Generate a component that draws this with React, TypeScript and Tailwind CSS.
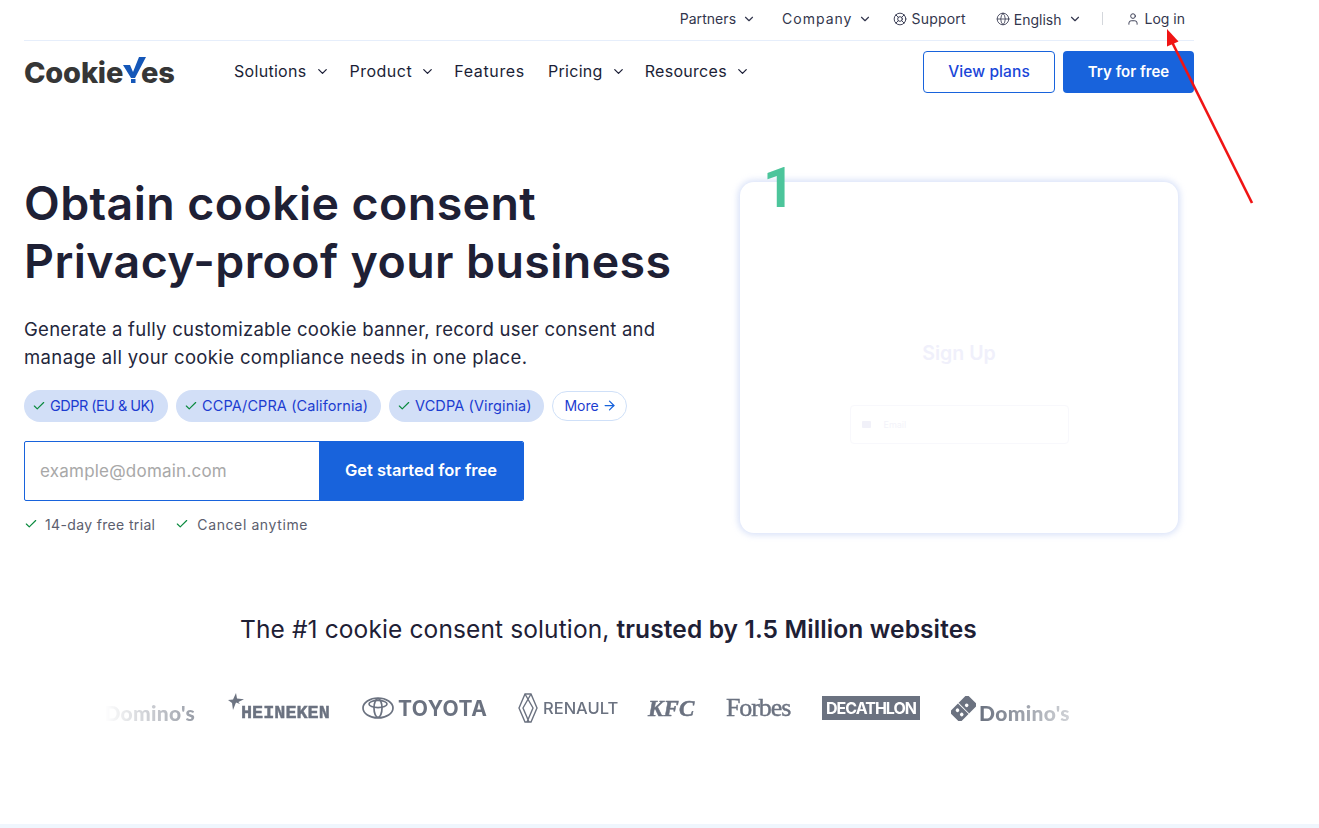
import React from "react";
import { ChevronDown, Check, ArrowRight, Globe, User, LifeBuoy } from "lucide-react";

const font = { fontFamily: 'Inter, "Noto Sans", sans-serif' };

function TopItem({ label, chevron = true, icon, className = "" }: { label: string; chevron?: boolean; icon?: React.ReactNode; className?: string }) {
  return (
    <span className={`flex items-center text-[14px] text-[#33364d] ${className}`}>
      {icon}
      {label}
      {chevron && <ChevronDown className="ml-[6px] h-[14px] w-[14px]" strokeWidth={2} />}
    </span>
  );
}

function NavItem({ label, chevron = true, track = "tracking-[0.3px]" }: { label: string; chevron?: boolean; track?: string }) {
  return (
    <span className={`flex items-center text-[16px] font-normal text-[#1b1e36] ${track}`}>
      {label}
      {chevron && <ChevronDown className="ml-[8px] h-[15px] w-[15px]" strokeWidth={2} />}
    </span>
  );
}

function Chip({ label, w, track }: { label: string; w: string; track: string }) {
  return (
    <span className={`flex h-[32px] items-center rounded-full bg-[#d2dff7] pl-[8px] text-[14.5px] text-[#1c3cd0] ${w} ${track}`}>
      <Check className="mr-[4px] h-[14px] w-[14px] shrink-0 text-[#0a8a3e]" strokeWidth={2} />
      <span className="whitespace-nowrap">{label}</span>
    </span>
  );
}

function Logos() {
  return (
    <div className="mt-[46px] ml-[105px] h-[34px] w-[1005px] overflow-hidden [mask-image:linear-gradient(to_right,transparent_0%,black_13%,black_87%,transparent_100%)]">
      <div className="-ml-[29px] flex h-full w-[1100px] items-center text-[#6b7280]">
        <span className="flex w-[119px] items-center justify-end pt-[8px] text-[21px] font-black leading-none tracking-[0.3px]" style={{ fontFamily: 'Lato, sans-serif' }}>Domino's</span>
        <span className="ml-[32px] flex w-[103px] items-end">
          <svg width="20" height="24" viewBox="0 0 20 24" className="-mr-[6px] mb-[6px] shrink-0" fill="#6b7280"><path d="M9 0l1 5.5 7 .8-5.6 2.6L13 11l-4-1.4L6 17l-1-7-4-3 5-.6z" /></svg>
          <span className="pt-[10px] text-[18.5px] font-bold leading-none [-webkit-text-stroke:0.4px_#6b7280]" style={{ fontFamily: '"Liberation Mono", monospace' }}>HEINEKEN</span>
        </span>
        <span className="ml-[32px] flex w-[124px] items-center">
          <svg width="32" height="22" viewBox="0 0 32 22" fill="none" stroke="#6b7280" strokeWidth="1.7" className="shrink-0">
            <ellipse cx="16" cy="11" rx="15" ry="10" />
            <ellipse cx="16" cy="11" rx="4" ry="9.4" />
            <ellipse cx="16" cy="7" rx="9" ry="3.6" />
          </svg>
          <span className="ml-[4px] text-[21px] font-bold leading-none tracking-[0.5px]" style={{ fontFamily: 'Inter, sans-serif' }}>TOYOTA</span>
        </span>
        <span className="ml-[32px] flex w-[99px] items-center">
          <svg width="20" height="30" viewBox="0 0 20 30" fill="none" stroke="#6b7280" strokeWidth="1.4" className="shrink-0">
            <path d="M7 1L1 15l6 14h6l6-14-6-14z" />
            <path d="M7 1l8 14-6 14M13 1L5 15l6 14" />
          </svg>
          <span className="ml-[5px] text-[16.5px] font-medium leading-none" style={{ fontFamily: 'Inter, sans-serif' }}>RENAULT</span>
        </span>
        <span className="ml-[31px] w-[48px] text-[23px] font-bold italic leading-none tracking-[0.2px] [-webkit-text-stroke:0.5px_#6b7280]" style={{ fontFamily: '"Liberation Serif", serif' }}>KFC</span>
        <span className="ml-[30px] w-[64px] text-[26px] leading-none tracking-[-1.1px] [-webkit-text-stroke:0.4px_#6b7280]" style={{ fontFamily: '"Liberation Serif", serif' }}>Forbes</span>
        <span className="ml-[32px] flex h-[24px] w-[98px] items-center justify-center bg-[#6b7280] text-[16px] font-bold tracking-[-1px] text-white" style={{ fontFamily: 'Inter, sans-serif' }}>DECATHLON</span>
        <span className="ml-[31px] flex w-[119px] items-center">
          <svg width="25" height="25" viewBox="0 0 25 25" className="shrink-0">
            <g transform="rotate(-45 12.5 12.5)">
              <rect x="5" y="0" width="15" height="25" rx="2" fill="#6b7280" transform="rotate(90 12.5 12.5)" />
              <circle cx="7" cy="9.5" r="1.8" fill="#fff" /><circle cx="7" cy="15.5" r="1.8" fill="#fff" />
              <circle cx="17" cy="12.5" r="1.8" fill="#fff" /><rect x="12.2" y="5" width="0.9" height="15" fill="#fff" />
            </g>
          </svg>
          <span className="ml-[3px] pt-[8px] text-[21px] font-black leading-none tracking-[0.35px]" style={{ fontFamily: 'Lato, sans-serif' }}>Domino's</span>
        </span>
      </div>
    </div>
  );
}

export default function App() {
  return (
    <div className="relative h-[828px] w-full overflow-hidden bg-white" style={font}>
      <div className="px-[24px]">
        <div className="w-[1170px]">
          <div className="flex h-[41px] items-center justify-end border-b border-[#e6eefb] pb-[3px]">
            <TopItem label="Partners" className="tracking-[0.05px]" />
            <TopItem label="Company" className="ml-[26px] tracking-[1px]" />
            <TopItem label="Support" chevron={false} className="ml-[21px] tracking-[0.2px]" icon={<LifeBuoy className="mr-[4px] h-[14px] w-[14px]" strokeWidth={1.6} />} />
            <TopItem label="English" className="ml-[30px] pt-[1px]" icon={<Globe className="mr-[4px] h-[14px] w-[14px]" strokeWidth={1.4} />} />
            <span className="ml-[20px] h-[13px] w-px bg-[#d4d7dc]" />
            <TopItem label="Log in" chevron={false} className="ml-[23px] mr-[9px]" icon={<User className="mr-[5px] h-[14px] w-[14px]" strokeWidth={1.6} />} />
          </div>

          <div className="flex h-[62px] items-center">
            <div className="flex w-[210px] items-center">
              <span className="text-[29px] font-extrabold leading-none tracking-[-0.2px] text-[#363636]">Cookie</span>
              <svg width="24" height="27" viewBox="0 0 24 27" className="-ml-[1px] -mr-[5px] -mt-[5px] shrink-0">
                <path d="M1 9h7l3 7L17 1h7L13 22H9z" fill="#1557b8" />
                <rect x="9" y="23" width="4.5" height="4" fill="#1557b8" />
              </svg>
              <span className="text-[29px] font-extrabold leading-none tracking-[-0.35px] text-[#363636]">es</span>
            </div>
            <nav className="-mt-[2px] flex items-center">
              <NavItem label="Solutions" />
              <span className="ml-[20px]"><NavItem label="Product" track="tracking-[0.5px]" /></span>
              <span className="ml-[19px]"><NavItem label="Features" chevron={false} track="tracking-[0.65px]" /></span>
              <span className="ml-[23px]"><NavItem label="Pricing" track="tracking-[0.3px]" /></span>
              <span className="ml-[19px]"><NavItem label="Resources" /></span>
            </nav>
            <div className="ml-auto flex items-center gap-[8px]">
              <span className="flex h-[42px] w-[132px] items-center justify-center rounded-[4px] border border-[#1863dc] text-[15.5px] font-medium tracking-[0.1px] text-[#1a46d8]">View plans</span>
              <span className="flex h-[42px] w-[131px] items-center justify-center rounded-[4px] bg-[#1863dc] text-[15px] font-semibold text-white">Try for free</span>
            </div>
          </div>

          <div className="flex pt-[72px]">
            <div className="w-[716px]">
              <h1 className="-mt-[1px] text-[46.5px] font-semibold leading-[58px] tracking-[0.4px] text-[#1e2035]">
                Obtain cookie consent
                <br />
                Privacy-proof your business
              </h1>
              <p className="mt-[25px] text-[18.5px] leading-[28px] text-[#23263b]">
                <span className="tracking-[0.27px]">Generate a fully customizable cookie banner, record user consent and</span>
                <br />
                <span className="tracking-[0.37px]">manage all your cookie compliance needs in one place.</span>
              </p>
              <div className="mt-[19px] flex items-center gap-[8px]">
                <Chip label="GDPR (EU & UK)" w="w-[144px]" track="tracking-[-0.55px]" />
                <Chip label="CCPA/CPRA (California)" w="w-[205px]" track="tracking-[0.1px]" />
                <Chip label="VCDPA (Virginia)" w="w-[155px]" track="tracking-[0.12px]" />
                <span className="flex h-[30px] w-[75px] items-center justify-center rounded-full border border-[#cfe0f8] pb-[1px] pl-[2px] text-[14px] text-[#1c3cd0]">
                  More
                  <ArrowRight className="ml-[3px] h-[15px] w-[15px] text-[#1863dc]" strokeWidth={2} />
                </span>
              </div>
              <div className="mt-[19px] flex h-[60px] w-[500px] overflow-hidden rounded-[2px] border border-[#1863dc]">
                <span className="flex flex-1 items-center pl-[15px] pt-[1px] text-[17px] tracking-[0.22px] text-[#a8a8a8]">example@domain.com</span>
                <span className="flex w-[204px] items-center justify-center bg-[#1863dc] pb-[2px] text-[16.5px] font-semibold text-white">Get started for free</span>
              </div>
              <div className="mt-[13px] flex h-[20px] items-center text-[14px] tracking-[0.35px] text-[#5b5e6e]">
                <Check className="mr-[7px] h-[14px] w-[14px] text-[#0a8a3e]" strokeWidth={2} />
                14-day free trial
                <Check className="ml-[20px] mr-[8px] h-[14px] w-[14px] text-[#0a8a3e]" strokeWidth={2} />
                <span className="tracking-[0.6px]">Cancel anytime</span>
              </div>
            </div>

            <div className="relative mt-[7px] flex h-[351px] w-[438px] flex-col items-center rounded-[14px] bg-white shadow-[0_0_6px_2px_rgba(200,212,245,0.7)]">
              <span className="absolute left-[23px] -top-[24px] text-[55px] font-bold leading-[60px] text-[#4cc59b]" style={{ fontFamily: 'Roboto, sans-serif' }}>1</span>
              <span className="mt-[157px] text-[19.5px] font-semibold leading-[28px] text-[#f0f0fb]">Sign Up</span>
              <div className="mt-[38px] flex h-[39px] w-[219px] items-center rounded-[4px] border border-[#f8f8fc] pl-[11px]">
                <span className="h-[7px] w-[9px] rounded-[1px] bg-[#f1f1f9]" />
                <span className="ml-[13px] text-[9px] text-[#f3f3fa]">Email</span>
              </div>
            </div>
          </div>
        </div>
      </div>

      <h2 className="mt-[79px] ml-[240px] w-[760px] whitespace-nowrap text-[24.5px] leading-[32px] tracking-[0.12px] text-[#1e2035]">
        The #1 cookie consent solution, <span className="font-semibold">trusted by 1.5 Million websites</span>
      </h2>

      <Logos />

      <div className="absolute inset-x-0 bottom-0 h-[4px] bg-[#eff6fd]" />

      <svg className="pointer-events-none absolute left-0 top-0" width="1319" height="828" viewBox="0 0 1319 828" fill="none">
        <line x1="1252" y1="203" x2="1172" y2="42" stroke="#f01414" strokeWidth="2.6" />
        <path d="M1167 29L1178.5 41.5 1167 46.5z" fill="#f01414" />
      </svg>
    </div>
  );
}
